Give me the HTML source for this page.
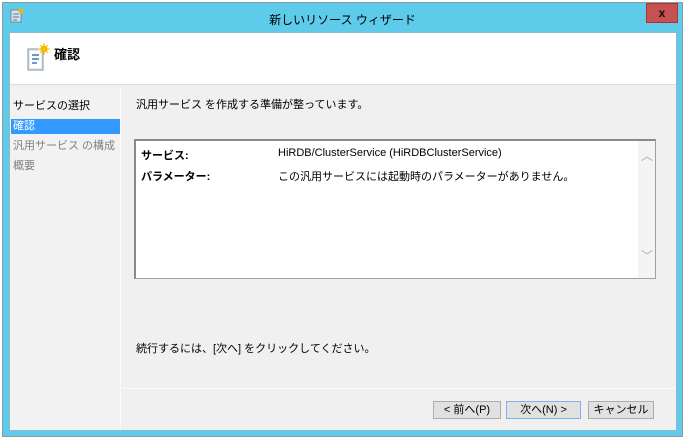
<!DOCTYPE html>
<html><head><meta charset="utf-8"><style>
*{margin:0;padding:0;box-sizing:border-box}
body{width:685px;height:440px;background:#fff;font-family:"Liberation Sans","Noto Sans CJK JP",sans-serif;font-size:11px;color:#000;position:relative;overflow:hidden}
.win{position:absolute;left:2px;top:2px;width:681px;height:435px;background:#5ecbeb;border:1px solid #8a9aa5}
.client{position:absolute;left:6px;top:29px;width:668px;height:399px;background:#f0f0f0;border:1px solid #8fb9c8}
.title{position:absolute;left:0;top:8px;width:100%;text-align:center;font-size:12px;color:#000}
.close{position:absolute;left:643px;top:0;width:32px;height:20px;background:#c75050;border:1px solid #a33;color:#111;font-weight:bold;text-align:center;line-height:18px;font-size:12px}
.hdr{position:absolute;left:0;top:0;width:666px;height:52px;background:#fff;border-bottom:1px solid #ddd}
.left{position:absolute;left:0;top:54px;width:111px;height:343px;background:#f2f2f2;border-right:1px solid #fafafa}
.abs{position:absolute;white-space:nowrap}
.btn{position:absolute;top:368px;height:18px;border:1px solid #adadad;background:#e1e1e1;text-align:center;line-height:16px;font-size:11px}
</style></head><body>
<div class="win">
 <svg class="abs" style="left:7px;top:5px" width="14" height="15" viewBox="0 0 14 15"><rect x="1" y="2" width="10" height="12" fill="#dde3ea" stroke="#7a8a9a"/><path d="M3 6h6M3 9h6M3 12h4" stroke="#4a7ab0"/><circle cx="11" cy="3" r="2.5" fill="#f7b500"/></svg>
 <div class="title">新しいリソース ウィザード</div>
 <div class="close">x</div>
 <div class="client">
  <div class="hdr">
   <svg class="abs" style="left:16px;top:10px" width="24" height="30" viewBox="0 0 24 30"><rect x="2" y="6" width="15" height="21" fill="#e6ebf0" stroke="#8090a0"/><rect x="4" y="8" width="11" height="17" fill="#fff"/><path d="M6 12h7M6 16h7M6 20h5" stroke="#3f78b8" stroke-width="1.5"/><circle cx="18" cy="6" r="3.5" fill="#f6a800"/><path d="M18 0v12M12 6h12M14 2l8 8M22 2l-8 8" stroke="#f6c400"/></svg>
   <div class="abs" style="left:44px;top:11px;font-size:13px;font-weight:bold">確認</div>
  </div>
  <div class="left">
   <div class="abs" style="left:3px;top:10px">サービスの選択</div>
   <div class="abs" style="left:1px;top:32px;width:109px;height:15px;background:#3399ff;color:#fff;padding-left:2px;line-height:15px">確認</div>
   <div class="abs" style="left:3px;top:50px;color:#808080">汎用サービス の構成</div>
   <div class="abs" style="left:3px;top:70px;color:#808080">概要</div>
  </div>
  <div class="abs" style="left:126px;top:63px">汎用サービス を作成する準備が整っています。</div>
  <div class="abs" style="left:124px;top:106px;width:522px;height:140px;background:#fff;border:1px solid #a0a0a0;border-top:2px solid #8a8a8a;border-left:2px solid #8a8a8a"></div>
  <div class="abs" style="left:628px;top:108px;width:17px;height:137px;background:#f4f4f4"></div>
  <div class="abs" style="left:631px;top:114px;color:#aaa;font-size:12px">︿</div>
  <div class="abs" style="left:631px;top:214px;color:#aaa;font-size:12px">﹀</div>
  <div class="abs" style="left:131px;top:114px;font-weight:bold">サービス:</div>
  <div class="abs" style="left:131px;top:135px;font-weight:bold">パラメーター:</div>
  <div class="abs" style="left:268px;top:114px">HiRDB/ClusterService (HiRDBClusterService)</div>
  <div class="abs" style="left:268px;top:135px">この汎用サービスには起動時のパラメーターがありません。</div>
  <div class="abs" style="left:126px;top:307px">続行するには、[次へ] をクリックしてください。</div>
  <div class="abs" style="left:112px;top:355px;width:554px;height:1px;background:#fafafa"></div>
  <div class="btn" style="left:423px;width:68px">&lt; 前へ(P)</div>
  <div class="btn" style="left:496px;width:75px;border-color:#7eb4ea">次へ(N) &gt;</div>
  <div class="btn" style="left:578px;width:66px">キャンセル</div>
 </div>
</div>
</body></html>
